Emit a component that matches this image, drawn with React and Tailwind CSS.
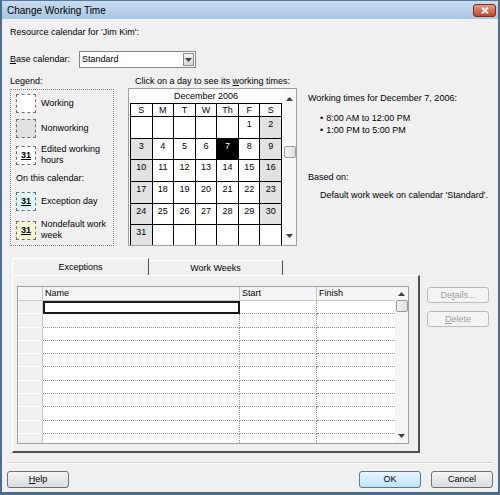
import React from 'react';

const weeks = [
  [null, null, null, null, null, 1, 2],
  [3, 4, 5, 6, 7, 8, 9],
  [10, 11, 12, 13, 14, 15, 16],
  [17, 18, 19, 20, 21, 22, 23],
  [24, 25, 26, 27, 28, 29, 30],
  [31, null, null, null, null, null, null],
];

const dayNames = ['S', 'M', 'T', 'W', 'Th', 'F', 'S'];

function Swatch({ bg, label }) {
  return (
    <div className={`w-[20px] h-[19px] border border-dashed border-[#707070] flex items-center justify-center shrink-0 ${bg}`}>
      {label && <span className="font-bold underline text-[9px] leading-none">31</span>}
    </div>
  );
}

function UpArrow() {
  return (
    <svg width="7" height="4" viewBox="0 0 7 4">
      <path d="M0 4 L3.5 0 L7 4 Z" fill="#404040" />
    </svg>
  );
}

function DownArrow() {
  return (
    <svg width="7" height="4" viewBox="0 0 7 4">
      <path d="M0 0 L3.5 4 L7 0 Z" fill="#404040" />
    </svg>
  );
}

function Button({ children, primary, className = '' }) {
  return (
    <div
      className={`h-[17px] w-[62px] rounded-[3px] border flex items-center justify-center ${
        primary
          ? 'border-[#3c7fb1] bg-gradient-to-b from-[#eaf6fd] to-[#bde4f8]'
          : 'border-[#707070] bg-gradient-to-b from-[#f4f4f4] to-[#dcdcdc]'
      } ${className}`}
    >
      {children}
    </div>
  );
}

export default function App() {
  const rows = Array.from({ length: 11 });

  return (
    <div className="w-[500px] h-[495px] bg-[#f0f0f0] border-x-2 border-b-[3px] border-[#4b6d8c] flex flex-col text-[9px] leading-[11px] text-black font-['Liberation_Sans',Arial,sans-serif] overflow-hidden">
      {/* title bar */}
      <div className="h-[19px] shrink-0 bg-gradient-to-b from-[#c9dcef] to-[#a8c5e3] border-t border-[#5a7a98] flex items-center pl-[5px] pr-[2px]">
        <span className="text-[10px] text-black">Change Working Time</span>
        <div className="ml-auto w-[23px] h-[13px] rounded-[3px] border border-[#7b2d20] bg-gradient-to-b from-[#e49a88] to-[#c1432c] flex items-center justify-center">
          <svg width="8" height="7" viewBox="0 0 8 7">
            <path d="M1 0.5 L7 6.5 M7 0.5 L1 6.5" stroke="white" strokeWidth="1.8" />
          </svg>
        </div>
      </div>

      <div className="ml-[8px] mt-[8px] h-[11px]">Resource calendar for 'Jim Kim':</div>

      <div className="ml-[8px] mt-[13px] h-[17px] flex items-center">
        <span className="w-[69px]">
          <span className="underline">B</span>ase calendar:
        </span>
        <div className="w-[117px] h-[17px] bg-white border border-[#828790] flex items-center pl-[2px] pr-[1px]">
          <span>Standard</span>
          <div className="ml-auto w-[11px] h-[13px] border border-[#8a8a8a] bg-gradient-to-b from-[#f4f4f4] to-[#d8d8d8] flex items-center justify-center">
            <DownArrow />
          </div>
        </div>
      </div>

      {/* middle section */}
      <div className="mt-[8px] h-[170px] flex">
        {/* legend */}
        <div className="ml-[8px] w-[104px] flex flex-col">
          <div className="h-[11px] leading-[11px]">Legend:</div>
          <div className="mt-[2px] h-[157px] border border-dotted border-[#808080] pl-[5px] pt-[4px] flex flex-col">
            <div className="flex items-center gap-[5px]">
              <Swatch bg="bg-white" />
              <span>Working</span>
            </div>
            <div className="mt-[6px] flex items-center gap-[5px]">
              <Swatch bg="bg-[#e2e2e2]" />
              <span>Nonworking</span>
            </div>
            <div className="mt-[6px] flex items-center gap-[5px]">
              <Swatch bg="bg-white" label />
              <span className="leading-[11px]">
                Edited working
                <br />
                hours
              </span>
            </div>
            <div className="mt-[7px] h-[11px]">On this calendar:</div>
            <div className="mt-[8px] flex items-center gap-[5px]">
              <Swatch bg="bg-[#dcf8f8]" label />
              <span>Exception day</span>
            </div>
            <div className="mt-[8px] flex items-center gap-[5px]">
              <Swatch bg="bg-[#fbf8d9]" label />
              <span className="leading-[11px]">
                Nondefault work
                <br />
                week
              </span>
            </div>
          </div>
        </div>

        {/* calendar */}
        <div className="ml-[14px] w-[169px] flex flex-col">
          <div className="h-[11px] text-center">
            Click on a day to see its <span className="underline">w</span>orking times:
          </div>
          <div className="mt-[1px] h-[158px] border border-[#a0a0a0] bg-white flex overflow-hidden">
            <div className="ml-[1px] w-[152px] flex flex-col">
              <div className="h-[14px] shrink-0 flex items-center justify-center">December 2006</div>
              <div className="shrink-0 grid grid-cols-7 grid-rows-[12px_repeat(6,20.7px)] gap-px bg-black border border-black">
                {dayNames.map((d, i) => (
                  <div key={'d' + i} className="bg-white flex items-center justify-center">
                    {d}
                  </div>
                ))}
                {weeks.flat().map((n, i) => {
                  const col = i % 7;
                  const weekend = n !== null && (col === 0 || col === 6);
                  const selected = n === 7;
                  const cls = selected
                    ? 'bg-black text-white'
                    : weekend
                    ? 'bg-[#e2e2e2]'
                    : 'bg-white';
                  return (
                    <div key={i} className={`${cls} flex justify-center pt-[2px]`}>
                      {n}
                    </div>
                  );
                })}
              </div>
            </div>
            <div className="ml-[1px] w-[13px] bg-[#f8f8f8] flex flex-col items-center pt-[8px]">
              <UpArrow />
              <div className="mt-[45px] w-[12px] h-[12px] rounded-[2px] border border-[#9a9a9a] bg-gradient-to-r from-[#f4f4f4] to-[#dedede]" />
              <div className="mt-auto mb-[7px]">
                <DownArrow />
              </div>
            </div>
          </div>
        </div>

        {/* working times */}
        <div className="ml-[11px] flex flex-col pt-[17px]">
          <div className="h-[11px]">Working times for December 7, 2006:</div>
          <div className="mt-[8px] ml-[12px] flex flex-col leading-[12px]">
            <div>
              <span className="mr-[3px]">•</span>8:00 AM to 12:00 PM
            </div>
            <div>
              <span className="mr-[3px]">•</span>1:00 PM to 5:00 PM
            </div>
          </div>
          <div className="mt-[36px] h-[11px]">Based on:</div>
          <div className="mt-[7px] ml-[12px] h-[11px]">Default work week on calendar 'Standard'.</div>
        </div>
      </div>

      {/* tabs */}
      <div className="mt-[12px] ml-[10px] h-[17px] flex items-end">
        <div className="w-[137px] h-[17px] border-t border-l border-white border-r border-r-[#505050] flex items-center justify-center">
          Exceptions
        </div>
        <div className="w-[134px] h-[15px] border-t border-white border-r border-r-[#505050] flex items-center justify-center">
          Work Weeks
        </div>
      </div>

      <div className="ml-[10px] h-[178px] flex">
        {/* panel */}
        <div className="w-[408px] h-[178px] border-l border-t border-white border-r-2 border-b-2 border-r-[#505050] border-b-[#505050] pl-[4px] pt-[10px]">
          <div className="w-[392px] h-[158px] border border-[#a0a0a0] bg-white flex overflow-hidden">
            <div className="w-[377px] flex flex-col">
              <div className="h-[14px] shrink-0 flex bg-[#f5f5f5] border-b border-[#c8c8c8]">
                <div className="w-[25px] border-r border-[#c8c8c8]" />
                <div className="w-[197px] border-r border-[#c8c8c8] pl-[2px] flex items-center">Name</div>
                <div className="w-[77px] border-r border-[#c8c8c8] pl-[2px] flex items-center">Start</div>
                <div className="w-[78px] pl-[2px] flex items-center">Finish</div>
              </div>
              {rows.map((_, i) => (
                <div key={i} className="h-[13.3px] shrink-0 flex">
                  <div className="w-[25px] bg-[#f0f0f0] border-r border-[#c8c8c8] border-b border-b-white" />
                  {i === 0 ? (
                    <div className="w-[197px] border-2 border-[#1a1a1a]" />
                  ) : (
                    <div className="w-[197px] border-r border-b border-dotted border-[#909090]" />
                  )}
                  <div className="w-[77px] border-r border-b border-dotted border-[#909090]" />
                  <div className="w-[78px] border-b border-dotted border-[#909090]" />
                </div>
              ))}
            </div>
            <div className="w-[13px] bg-[#f5f5f5] flex flex-col items-center pt-[5px]">
              <UpArrow />
              <div className="mt-[4px] w-[12px] h-[12px] rounded-[2px] border border-[#9a9a9a] bg-gradient-to-r from-[#f4f4f4] to-[#dedede]" />
              <div className="mt-auto mb-[5px]">
                <DownArrow />
              </div>
            </div>
          </div>
        </div>

        <div className="ml-[7px] mt-[12px] flex flex-col gap-[8px]">
          <div className="w-[62px] h-[16px] rounded-[3px] border border-[#bcbcbc] bg-[#f4f4f4] text-[#a0a0a0] flex items-center justify-center">
            De<span className="underline">t</span>ails...
          </div>
          <div className="w-[62px] h-[16px] rounded-[3px] border border-[#bcbcbc] bg-[#f4f4f4] text-[#a0a0a0] flex items-center justify-center">
            <span className="underline">D</span>elete
          </div>
        </div>
      </div>

      {/* separator */}
      <div className="mt-[9px] ml-[5px] w-[486px] h-[2px] border-t border-[#d5d5d5] border-b border-b-white" />

      {/* bottom buttons */}
      <div className="mt-[7px] ml-[5px] w-[486px] flex">
        <Button>
          <span>
            <span className="underline">H</span>elp
          </span>
        </Button>
        <Button primary className="ml-auto">
          OK
        </Button>
        <Button className="ml-[10px]">Cancel</Button>
      </div>
    </div>
  );
}
